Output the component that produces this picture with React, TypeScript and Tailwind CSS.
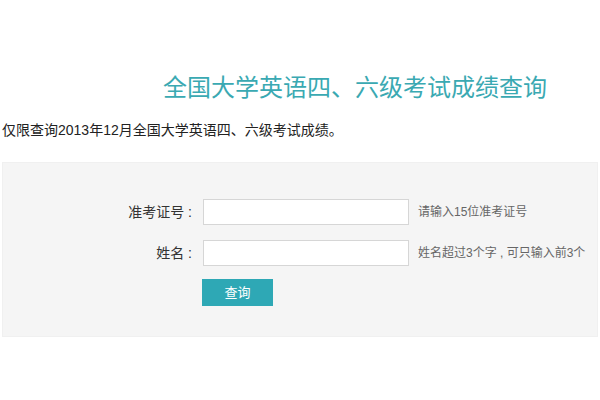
export default function App() {
  const font = { fontFamily: '"Liberation Sans", "Noto Sans CJK SC", sans-serif' };
  return (
    <div className="w-[600px] h-[400px] bg-white overflow-hidden" style={font}>
      <h1 className="pl-[163px] pt-[74px] text-[24px] leading-[28px] font-normal text-[#3aa9b2]">
        全国大学英语四、六级考试成绩查询
      </h1>
      <p className="pl-[2px] mt-[18px] text-[14px] leading-[20px] text-[#222]">
        仅限查询2013年12月全国大学英语四、六级考试成绩。
      </p>
      <div className="mx-[2px] mt-[22px] h-[175px] bg-[#f5f5f5] border border-[#f0f0f0] pt-[36px]">
        <div className="flex items-center">
          <label className="w-[189px] text-right text-[14px] text-[#333]">准考证号 :</label>
          <input className="ml-[11px] w-[206px] h-[26px] bg-white border border-[#d6d6d6] outline-none" />
          <span className="ml-[9px] text-[12px] text-[#666]">请输入15位准考证号</span>
        </div>
        <div className="flex items-center mt-[15px]">
          <label className="w-[189px] text-right text-[14px] text-[#333]">姓名 :</label>
          <input className="ml-[11px] w-[206px] h-[26px] bg-white border border-[#d6d6d6] outline-none" />
          <span className="ml-[9px] text-[12px] text-[#666] whitespace-nowrap">姓名超过3个字 , 可只输入前3个</span>
        </div>
        <div className="mt-[13px] pl-[199px]">
          <button className="w-[71px] h-[27px] bg-[#2ea8b5] text-white text-[13px]">查询</button>
        </div>
      </div>
    </div>
  );
}
